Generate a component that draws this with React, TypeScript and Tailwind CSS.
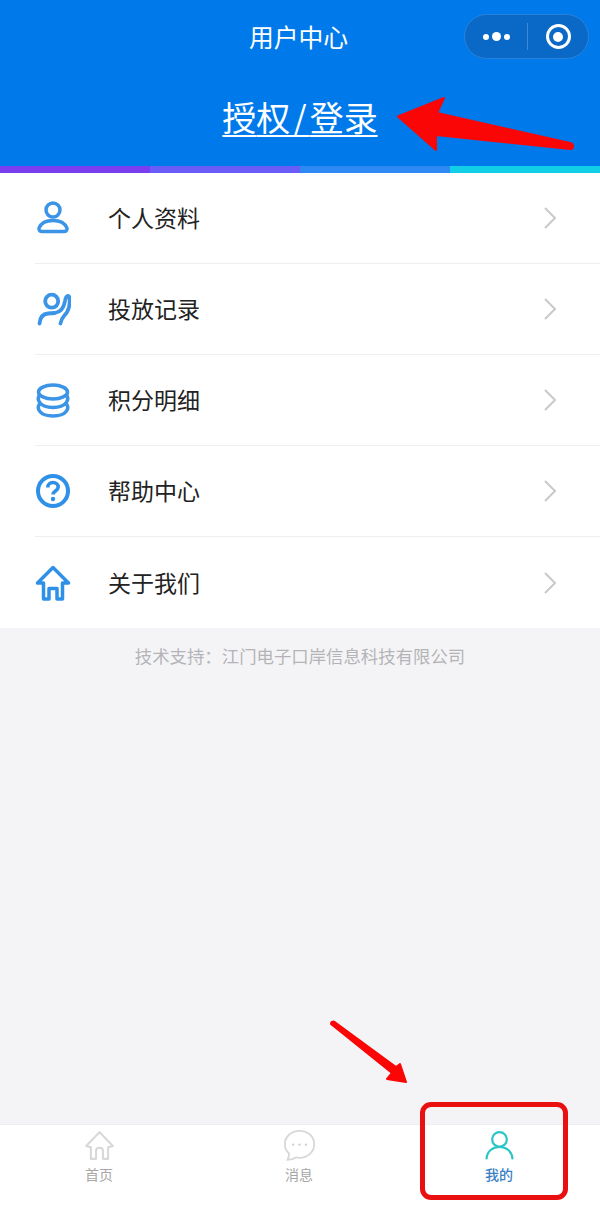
const CJK = 'font-["Noto_Sans_CJK_SC","Noto_Sans",sans-serif]'

function PersonIcon() {
  return (
    <svg viewBox="0 0 36 36" className="w-9 h-9" fill="none" stroke="#3b94e6" strokeWidth="3.5">
      <circle cx="18" cy="10" r="7" />
      <path d="M6.5 31.500h23a2.600 2.600 0 0 0 2.400-3.600C30 23.500 25 20.500 18 20.500S6 23.500 4.100 27.900a2.600 2.600 0 0 0 2.400 3.600z" />
    </svg>
  )
}

function WaveIcon() {
  return (
    <svg viewBox="0 0 36 36" className="w-9 h-9" fill="none" stroke="#3b94e6" strokeWidth="3.8" strokeLinecap="round">
      <circle cx="16.700" cy="10.200" r="6.500" />
      <path d="M4.500 32.500C5 26 8 23 13 22.500L20 22C26 21 29 16 30 10 30.500 6 32 4.500 33.500 5 35 6 35 11 34 16 33 21 31 23 29 25 27 27 26 30 25.500 32.500" />
    </svg>
  )
}

function CoinsIcon() {
  return (
    <svg viewBox="0 0 36 36" className="w-9 h-9" fill="none" stroke="#3b94e6" strokeWidth="3.5" strokeLinecap="round">
      <ellipse cx="18" cy="10" rx="14.500" ry="7" />
      <path d="M4.500 13C1.500 17 4 25.500 18 25.500S34.500 17 31.500 13" />
      <path d="M4.500 22C1.500 26 4 34 18 34S34.500 26 31.500 22" />
    </svg>
  )
}

function HelpIcon() {
  return (
    <svg viewBox="0 0 36 36" className="w-9 h-9" fill="none" stroke="#2f90e8" strokeWidth="4">
      <circle cx="18" cy="18" r="15" />
      <path d="M12.800 14.500c0-3 2.300-5 5.200-5s5.200 2 5.200 4.600c0 3.900-5.200 3.900-5.200 7.400" strokeWidth="3.600" />
      <circle cx="18" cy="26" r="2.200" fill="#2f90e8" stroke="none" />
    </svg>
  )
}

function HomeIcon({ color, width }: { color: string; width: number }) {
  return (
    <svg viewBox="0 0 36 36" className="w-9 h-9" fill="none" stroke={color} strokeWidth={width} strokeLinejoin="round">
      <path d="M18 2.500 2.500 18H8.500V34H14V23.500H22V34H27.500V18H33.500Z" />
    </svg>
  )
}

function Chevron() {
  return (
    <svg viewBox="0 0 14 24" className="w-[14px] h-6" fill="none" stroke="#c9c9c9" strokeWidth="2">
      <path d="M2 2l10 10L2 22" />
    </svg>
  )
}

const menu = [
  { label: '个人资料', icon: <PersonIcon /> },
  { label: '投放记录', icon: <WaveIcon /> },
  { label: '积分明细', icon: <CoinsIcon /> },
  { label: '帮助中心', icon: <HelpIcon /> },
  { label: '关于我们', icon: <HomeIcon color="#2f90e8" width={3.5} /> },
]

export default function App() {
  return (
    <div className={`relative h-[1213px] w-[600px] overflow-hidden flex flex-col bg-[#f4f4f6] ${CJK}`}>
      {/* header */}
      <div className="bg-[#007aeb] h-[173px] flex flex-col text-white">
        <div className="h-[74px] flex items-center justify-center relative">
          <span className="text-[24.800px] leading-none pr-[3px] pb-[2px]">用户中心</span>
          <div className="absolute left-[464px] top-[14px] w-[125px] h-[45px] rounded-full bg-[#0a69c6] border border-[#2a82d8] flex items-center">
            <div className="w-[62px] flex items-center justify-center gap-[3px]">
              <span className="w-[6px] h-[6px] rounded-full bg-white" />
              <span className="w-[9px] h-[9px] rounded-full bg-white" />
              <span className="w-[6px] h-[6px] rounded-full bg-white" />
            </div>
            <div className="w-px h-[27px] bg-[#3a8bd8]" />
            <div className="flex-1 flex items-center justify-center">
              <div className="w-[25px] h-[25px] rounded-full border-[3px] border-white flex items-center justify-center">
                <span className="w-[10px] h-[10px] rounded-full bg-white" />
              </div>
            </div>
          </div>
        </div>
        <div className="flex-1 flex items-start justify-center pt-[22px]">
          <span className="text-[34px] leading-[1.25] underline underline-offset-[4px] decoration-2">
            授<span className="tracking-[3px]">权/</span>登录
          </span>
        </div>
        <div className="h-[7px] grid grid-cols-4">
          <div className="bg-[#7a3df0]" />
          <div className="bg-[#6a5cf6]" />
          <div className="bg-[#2f89f2]" />
          <div className="bg-[#12cfe8]" />
        </div>
      </div>

      {/* menu */}
      <div className="bg-white">
        {menu.map(m => (
          <div key={m.label} className="ml-[35px] h-[91px] flex items-center border-b border-[#eeeeee] last:border-b-0">
            {m.icon}
            <span className="ml-[37px] pb-[1px] text-[23px] text-[#222]">{m.label}</span>
            <div className="ml-auto mr-[43px] flex">
              <Chevron />
            </div>
          </div>
        ))}
      </div>

      <p className="mt-[15px] text-center text-[17.400px] leading-[26px] text-[#b4b4b8]">技术支持：江门电子口岸信息科技有限公司</p>

      {/* tab bar */}
      <div className="mt-auto h-[89px] bg-white border-t border-[#eeeeee] grid grid-cols-3">
        <div className="flex flex-col items-center pt-[4px] pr-[2px]">
          <div className="h-[33px] flex items-center">
            <svg viewBox="0 0 36 36" className="w-[31px] h-[31px]" fill="none" stroke="#d8d8d8" strokeWidth="2.400" strokeLinejoin="round" strokeLinecap="round">
              <path d="M18 2.500 2.500 18.500 8 20V33.500H14V24C14 19.500 22 19.500 22 24V33.500H28V20L33.500 18.500Z" />
            </svg>
          </div>
          <span className="text-[14px] leading-[24px] text-[#a6a6a6]">首页</span>
        </div>
        <div className="flex flex-col items-center pt-[4px] pr-[2px]">
          <div className="h-[33px] flex items-center">
            <svg viewBox="0 0 36 36" className="w-[33px] h-[33px]" fill="none" stroke="#d8d8d8" strokeWidth="2">
              <path d="M18 2C9 2 2 8.500 2 16.500c0 4.500 1.800 7.500 4.500 10 .5 2.500-.5 5-1.500 7 3.500 0 7-1 9-2.500 1.300.3 2.700.5 4 .5 9 0 16-6.500 16-15S27 2 18 2Z" />
              <circle cx="11" cy="17" r="1.300" fill="#d0d0d0" stroke="none" />
              <circle cx="18" cy="17" r="1.300" fill="#d0d0d0" stroke="none" />
              <circle cx="25" cy="17" r="1.300" fill="#d0d0d0" stroke="none" />
            </svg>
          </div>
          <span className="text-[14px] leading-[24px] text-[#a6a6a6]">消息</span>
        </div>
        <div className="flex flex-col items-center pt-[4px] pr-[2px]">
          <div className="h-[33px] flex items-center">
            <svg viewBox="0 0 36 36" className="w-[31px] h-[31px]" fill="none" stroke="#2cc6c6" strokeWidth="2.600" strokeLinecap="round">
              <circle cx="18" cy="11" r="8.500" />
              <path d="M3 33C3.500 25 10 19.500 18 19.500S32.500 25 33 33" />
            </svg>
          </div>
          <span className="text-[14px] leading-[24px] font-medium text-[#3a80c4]">我的</span>
        </div>
      </div>

      {/* red annotations */}
      <svg viewBox="0 0 600 1213" className="absolute inset-0 w-[600px] h-[1213px] pointer-events-none" fill="#fa0606" stroke="#fa0606" strokeWidth="2" strokeLinejoin="round">
        <path d="M398 116.500 444 98 437 113 570 143C574 144 574 149 570 149L436 135 436 150Z" />
        <path d="M331 1024C331 1021 334 1021 336 1023L396 1067 400 1064 406 1082 387 1079 392 1073Z" />
      </svg>
      <div className="absolute left-[420px] top-[1102px] w-[148px] h-[98px] rounded-[11px] border-[5px] border-[#ea0f10]" />
    </div>
  )
}
